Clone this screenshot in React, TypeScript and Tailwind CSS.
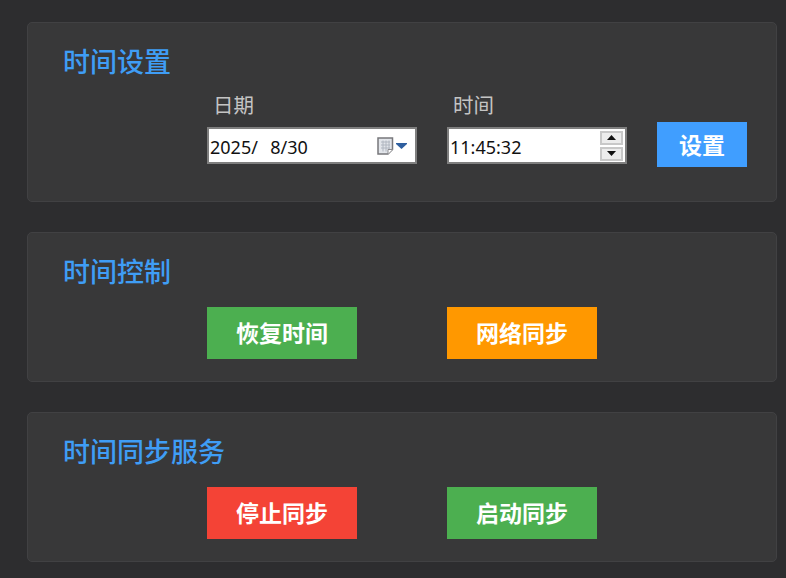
const cjk = 'font-["Noto_Sans_CJK_SC","Noto_Sans",sans-serif]';

function CalendarIcon() {
  return (
    <svg width="30" height="18" viewBox="0 0 30 18" className="shrink-0">
      <path d="M1 1H15.500V12.500L11 17H1Z" fill="#e2e5ea" stroke="#77777b" strokeWidth="1.5" />
      <path d="M4 5H13M4 8H13M4 11H13M6 3.500V14.500M9 3.500V14.500M12 3.500V12" stroke="#b0b6c0" strokeWidth="1" />
      <path d="M11 17V12.500H15.500" fill="#fff" stroke="#8a8a8e" strokeWidth="1" />
      <path d="M19 6H30V7L24.500 12L19 7Z" fill="#2f5f9f" />
    </svg>
  );
}

function Spinner() {
  return (
    <div className="flex flex-col gap-[2px]">
      <div className="flex h-[14px] w-[23px] items-center justify-center border-2 border-[#c8c8c8] bg-[#ececec]">
        <svg width="9" height="5" viewBox="0 0 9 5"><path d="M4.500 0L9 5H0Z" fill="#111" /></svg>
      </div>
      <div className="flex h-[14px] w-[23px] items-center justify-center border-2 border-[#c8c8c8] bg-[#ececec]">
        <svg width="9" height="5" viewBox="0 0 9 5"><path d="M0 0H9L4.500 5Z" fill="#111" /></svg>
      </div>
    </div>
  );
}

function Field({ label, children, width }: { label: string; children: React.ReactNode; width: string }) {
  return (
    <div className={`flex flex-col ${width}`}>
      <span className={`${cjk} mb-[8px] pl-[6px] text-[20.500px] leading-[30px] text-[#c4c4c4]`}>{label}</span>
      {children}
    </div>
  );
}

function ActionButton({ label, color }: { label: string; color: string }) {
  return (
    <button className={`${cjk} h-[52px] w-[150px] pb-[2px] text-[23px] leading-none font-bold text-white ${color}`}>
      {label}
    </button>
  );
}

function Panel({ title, height, children }: { title: string; height: string; children: React.ReactNode }) {
  return (
    <section className={`${height} rounded-[5px] border border-[#414143] bg-[#383839] pt-[18px] pl-[35px]`}>
      <h2 className={`${cjk} text-[27px] leading-[40px] font-medium text-[#3f9df5]`}>{title}</h2>
      {children}
    </section>
  );
}

export default function App() {
  return (
    <div className="h-[578px] w-[786px] overflow-hidden bg-[#2d2d2f] pt-[22px] pr-[9px] pl-[27px]">
      <div className="flex flex-col gap-[30px]">
        <Panel title="时间设置" height="h-[180px]">
          <div className="mt-[8px] ml-[144px] flex items-end gap-[30px]">
            <Field label="日期" width="w-[210px]">
              <div className="flex h-[37px] items-center justify-between border-2 border-[#7f7f7f] bg-white pr-[8px] pl-[1px]">
                <span className="pt-[3px] font-['Noto_Sans',sans-serif] text-[18px] whitespace-pre text-[#111] [word-spacing:1.500px]">2025/  8/30</span>
                <CalendarIcon />
              </div>
            </Field>
            <Field label="时间" width="w-[180px]">
              <div className="flex h-[37px] items-center justify-between border-2 border-[#7f7f7f] bg-white pr-[2px] pl-[1px]">
                <span className="pt-[3px] font-['Noto_Sans',sans-serif] text-[18px] text-[#111]">11:45:32</span>
                <Spinner />
              </div>
            </Field>
            <button className={`${cjk} -mb-[3px] h-[45px] w-[90px] bg-[#409eff] text-[23px] leading-none font-bold text-white`}>
              设置
            </button>
          </div>
        </Panel>
        <Panel title="时间控制" height="h-[150px]">
          <div className="mt-[16px] ml-[144px] flex gap-[90px]">
            <ActionButton label="恢复时间" color="bg-[#4caf50]" />
            <ActionButton label="网络同步" color="bg-[#ff9800]" />
          </div>
        </Panel>
        <Panel title="时间同步服务" height="h-[150px]">
          <div className="mt-[16px] ml-[144px] flex gap-[90px]">
            <ActionButton label="停止同步" color="bg-[#f44336]" />
            <ActionButton label="启动同步" color="bg-[#4caf50]" />
          </div>
        </Panel>
      </div>
    </div>
  );
}
